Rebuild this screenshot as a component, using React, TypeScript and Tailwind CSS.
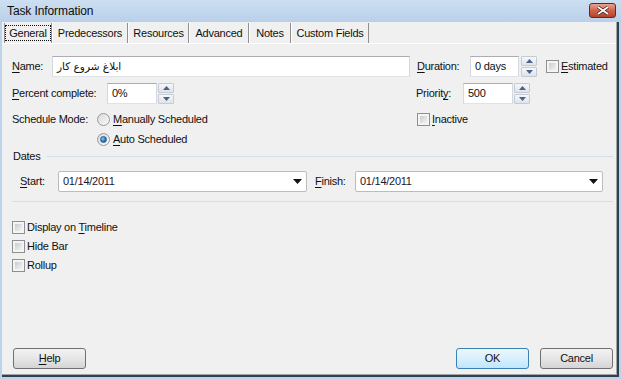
import type { ReactNode } from 'react';

const U = ({ children }: { children: ReactNode }) => (
  <span className="underline underline-offset-[2px] decoration-[1px]">{children}</span>
);

function Spinner() {
  const arrow = (up: boolean) => (
    <svg width="7" height="4" viewBox="0 0 7 4">
      <path d={up ? 'M0 4 L3.5 0 L7 4 Z' : 'M0 0 L3.5 4 L7 0 Z'} fill="#4c6189" />
    </svg>
  );
  return (
    <div className="flex flex-col w-[16px] h-[21px] gap-[1px]">
      <div className="flex-1 flex items-center justify-center border border-[#c5cbd3] rounded-[1px] bg-linear-to-b from-[#f6f8fa] to-[#dfe4ea]">
        {arrow(true)}
      </div>
      <div className="flex-1 flex items-center justify-center border border-[#c5cbd3] rounded-[1px] bg-linear-to-b from-[#f6f8fa] to-[#dfe4ea]">
        {arrow(false)}
      </div>
    </div>
  );
}

function Checkbox() {
  return (
    <div className="w-[13px] h-[13px] border border-[#8e8f8f] bg-[#f4f4f4] p-[2px] shrink-0">
      <div className="w-full h-full bg-linear-to-br from-[#c9ccd1] to-[#f3f3f3]" />
    </div>
  );
}

function Radio({ on }: { on?: boolean }) {
  return (
    <div className="w-[13px] h-[13px] rounded-full border border-[#9a9a9a] bg-linear-to-br from-[#d6d8db] to-[#fbfbfb] flex items-center justify-center shrink-0">
      {on && (
        <div className="w-[7px] h-[7px] rounded-full border border-[#2b5f92] bg-radial-[at_35%_35%] from-[#8fd0f7] via-[#2f7fc4] to-[#0f4a86]" />
      )}
    </div>
  );
}

function TextBox({ w, children }: { w: string; children: ReactNode }) {
  return (
    <div
      className={`${w} h-[21px] flex items-center px-[4px] bg-white border border-[#abadb3] border-l-[#d5d8de] border-r-[#d5d8de] border-b-[#dfe3e8] text-[#111]`}
    >
      {children}
    </div>
  );
}

function Combo({ w, value }: { w: string; value: string }) {
  return (
    <div
      className={`${w} h-[21px] flex items-center justify-between pl-[4px] pr-[4px] bg-white border border-[#bcbcbc] rounded-[2px] text-[#1b1530]`}
    >
      <span>{value}</span>
      <svg width="9" height="5" viewBox="0 0 9 5">
        <path d="M0 0 H9 L4.5 5 Z" fill="#111" />
      </svg>
    </div>
  );
}

function Button({ children, primary }: { children: ReactNode; primary?: boolean }) {
  return (
    <div
      className={`w-[73px] h-[21px] rounded-[3px] border flex items-center justify-center text-[#111] ${
        primary
          ? 'border-[#3c7fb1] bg-linear-to-b from-[#eaf6fd] via-[#d9f0fc] to-[#bee6fd]'
          : 'border-[#707070] bg-linear-to-b from-[#f2f2f2] via-[#e6e6e6] to-[#d4d4d4]'
      }`}
    >
      {children}
    </div>
  );
}

const tabs: [string, number][] = [
  ['General', 48],
  ['Predecessors', 76],
  ['Resources', 61],
  ['Advanced', 60],
  ['Notes', 42],
  ['Custom Fields', 78],
];

export default function App() {
  return (
    <div className="w-[621px] h-[379px] flex flex-col bg-[#bdd3ea] font-['Liberation_Sans','DejaVu_Sans',sans-serif] text-[11px] text-[#111] select-none">
      {/* title bar */}
      <div className="h-[22px] flex items-center justify-between pl-[7px] pr-[5px] bg-linear-to-b from-[#cddff1] to-[#b9d0e9] shrink-0">
        <span className="text-[12px] text-[#0d0d0d] tracking-[-0.1px]">Task Information</span>
        <div className="w-[27px] h-[15px] mt-[-2px] rounded-[3px] border border-[#5c2a2a] bg-linear-to-b from-[#e8a493] via-[#d0624c] to-[#b8412d] flex items-center justify-center">
          <svg width="12" height="9" viewBox="0 0 12 9">
            <path d="M1 1 L11 8 M11 1 L1 8" stroke="#3b1a14" strokeWidth="3.2" />
            <path d="M1 1 L11 8 M11 1 L1 8" stroke="#ffffff" strokeWidth="1.8" />
          </svg>
        </div>
      </div>

      {/* frame + body */}
      <div className="flex-1 ml-[2px] mr-[2px] mb-[2px] border-r-2 border-b-2 border-[#2f4254] flex">
        <div className="flex-1 flex flex-col bg-[#f0f0f0] border-r border-b border-[#a5a5a5] tracking-[-0.25px]">
          {/* tabs */}
          <div className="flex h-[21px] mt-[1px] pl-[2px] border-b border-white">
            {tabs.map(([t, w], i) => (
              <div
                key={t}
                style={{ width: w }}
                className={`h-full flex items-center justify-center border-r border-[#8f8f8f] ${
                  i === 0 ? 'border-l border-l-[#8f8f8f]' : 'border-l border-l-white'
                }`}
              >
                {i === 0 ? (
                  <span className="w-[46px] h-[16px] flex items-center justify-center border border-dotted border-[#111]">
                    {t}
                  </span>
                ) : (
                  t
                )}
              </div>
            ))}
          </div>

          <div className="flex flex-col flex-1 pl-[10px]">
            {/* name row */}
            <div className="flex items-center mt-[12px]">
              <span className="w-[40px]">
                <U>N</U>ame:
              </span>
              <TextBox w="w-[358px]">
                <span className="font-['DejaVu_Sans',sans-serif] text-[10.5px] tracking-normal">ابلاغ شروع کار</span>
              </TextBox>
              <span className="w-[53px] ml-[7px]">
                <U>D</U>uration:
              </span>
              <TextBox w="w-[49px]">0 days</TextBox>
              <div className="ml-[2px]">
                <Spinner />
              </div>
              <div className="ml-[9px]">
                <Checkbox />
              </div>
              <span className="ml-[2px]">
                <U>E</U>stimated
              </span>
            </div>

            {/* percent row */}
            <div className="flex items-center mt-[6px]">
              <div className="w-[404px] flex items-center">
                <span className="w-[95px]">
                  <U>P</U>ercent complete:
                </span>
                <TextBox w="w-[50px]">0%</TextBox>
                <div className="ml-[1px]">
                  <Spinner />
                </div>
              </div>
              <span className="w-[47px]">
                Priorit<U>y</U>:
              </span>
              <TextBox w="w-[50px]">500</TextBox>
              <div className="ml-[1px]">
                <Spinner />
              </div>
            </div>

            {/* schedule mode */}
            <div className="flex items-center h-[16px] mt-[7px]">
              <div className="w-[404px] flex items-center">
                <span className="w-[85px]">Schedule Mode:</span>
                <Radio />
                <span className="ml-[3px]">
                  <U>M</U>anually Scheduled
                </span>
              </div>
              <div className="ml-[1px]">
                <Checkbox />
              </div>
              <span className="ml-[2px]">
                <U>I</U>nactive
              </span>
            </div>
            <div className="flex items-center h-[16px] mt-[4px] pl-[85px]">
              <Radio on />
              <span className="ml-[3px]">
                <U>A</U>uto Scheduled
              </span>
            </div>

            {/* dates */}
            <div className="flex items-center h-[14px] mt-[2px] pr-[3px]">
              <span className="ml-[1px]">Dates</span>
              <div className="flex-1 ml-[6px] h-[1px] bg-[#d5dfe5]" />
            </div>
            <div className="flex items-center mt-[8px] pl-[8px]">
              <span className="w-[38px]">
                <U>S</U>tart:
              </span>
              <Combo w="w-[249px]" value="01/14/2011" />
              <span className="w-[40px] ml-[8px]">
                <U>F</U>inish:
              </span>
              <Combo w="w-[248px]" value="01/14/2011" />
            </div>

            <div className="h-[1px] bg-[#d5dfe5] mt-[9px] mr-[3px]" />

            {/* checkboxes */}
            <div className="flex flex-col gap-[4px] mt-[18px]">
              <div className="flex items-center h-[15px]">
                <Checkbox />
                <span className="ml-[2px]">
                  Display on <U>T</U>imeline
                </span>
              </div>
              <div className="flex items-center h-[15px]">
                <Checkbox />
                <span className="ml-[2px]">Hide Bar</span>
              </div>
              <div className="flex items-center h-[15px]">
                <Checkbox />
                <span className="ml-[2px]">Rollup</span>
              </div>
            </div>

            {/* buttons */}
            <div className="flex items-center mt-auto mb-[5px] pl-[1px] pr-[3px]">
              <Button>
                <U>H</U>elp
              </Button>
              <div className="flex-1" />
              <Button primary>OK</Button>
              <div className="ml-[11px]">
                <Button>Cancel</Button>
              </div>
            </div>
          </div>
        </div>
      </div>
    </div>
  );
}
